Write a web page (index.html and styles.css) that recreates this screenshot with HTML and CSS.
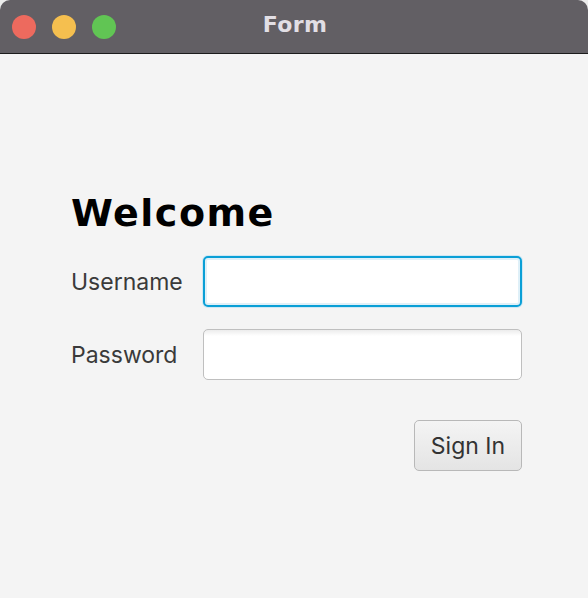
FILE: index.html
```html
<!DOCTYPE html>
<html>
<head>
<meta charset="utf-8">
<title>Form</title>
<link rel="stylesheet" href="styles.css">
</head>
<body>
<div class="window">
  <header class="titlebar">
    <div class="lights">
      <span class="light red"></span>
      <span class="light yellow"></span>
      <span class="light green"></span>
    </div>
    <div class="title">Form</div>
  </header>
  <main class="content">
    <h1 class="welcome">Welcome</h1>
    <div class="form">
      <label class="label" for="user">Username</label>
      <input class="field focused" id="user" type="text">
      <label class="label" for="pass">Password</label>
      <input class="field" id="pass" type="password">
    </div>
    <div class="actions">
      <button class="btn" type="button">Sign In</button>
    </div>
  </main>
</div>
</body>
</html>
```
FILE: styles.css
```css
html, body {
  margin: 0;
  padding: 0;
  background: #ececec;
}
.window {
  width: 588px;
  height: 598px;
  display: flex;
  flex-direction: column;
  background: #f4f4f4;
  border-radius: 10px 10px 0 0;
  overflow: hidden;
}
.titlebar {
  position: relative;
  height: 53px;
  flex: none;
  background: #625f64;
  border-bottom: 1px solid #1c1c1c;
  display: flex;
  align-items: center;
}
.lights {
  display: flex;
  gap: 16px;
  padding-left: 12px;
  padding-top: 1px;
}
.light {
  width: 24px;
  height: 24px;
  border-radius: 50%;
  display: block;
}
.red { background: #ed6a5e; }
.yellow { background: #f5bf4f; }
.green { background: #61c554; }
.title {
  position: absolute;
  left: 0;
  right: 0;
  top: 0;
  bottom: 0;
  display: flex;
  align-items: center;
  justify-content: center;
  padding-left: 2px;
  padding-bottom: 4px;
  font-family: "DejaVu Sans", sans-serif;
  font-weight: bold;
  font-size: 22px;
  letter-spacing: 0.4px;
  color: #e2dfe5;
}
.content {
  padding: 138px 66px 0 71px;
  font-family: Inter, "Liberation Sans", sans-serif;
}
.welcome {
  margin: 0;
  font-family: "DejaVu Sans", sans-serif;
  font-weight: bold;
  font-size: 38px;
  letter-spacing: 1.5px;
  line-height: 42px;
  color: #000;
}
.form {
  margin-top: 22px;
  display: grid;
  grid-template-columns: 132px 319px;
  row-gap: 22px;
  align-items: center;
}
.label {
  font-size: 23px;
  font-weight: 400;
  color: #3a3a3a;
}
.field {
  box-sizing: border-box;
  height: 51px;
  margin: 0;
  border: 1px solid #bfbfbf;
  border-radius: 5px;
  background: linear-gradient(#ececec 0, #fff 6px, #fff 100%);
  font-size: 20px;
  outline: none;
}
.field.focused {
  border: 2px solid #0a9fd6;
  background: #fff;
  box-shadow: 0 0 0 1px #cfe8f4, inset 0 0 0 2px #dff0f8;
}
.actions {
  margin-top: 40px;
  display: flex;
  justify-content: flex-end;
}
.btn {
  box-sizing: border-box;
  width: 108px;
  height: 51px;
  margin: 0;
  border: 1px solid #b8b8b8;
  border-radius: 5px;
  background: linear-gradient(#f4f4f4, #e4e4e4);
  font-family: Inter, "Liberation Sans", sans-serif;
  font-size: 23px;
  color: #333;
  padding: 0;
}
```
